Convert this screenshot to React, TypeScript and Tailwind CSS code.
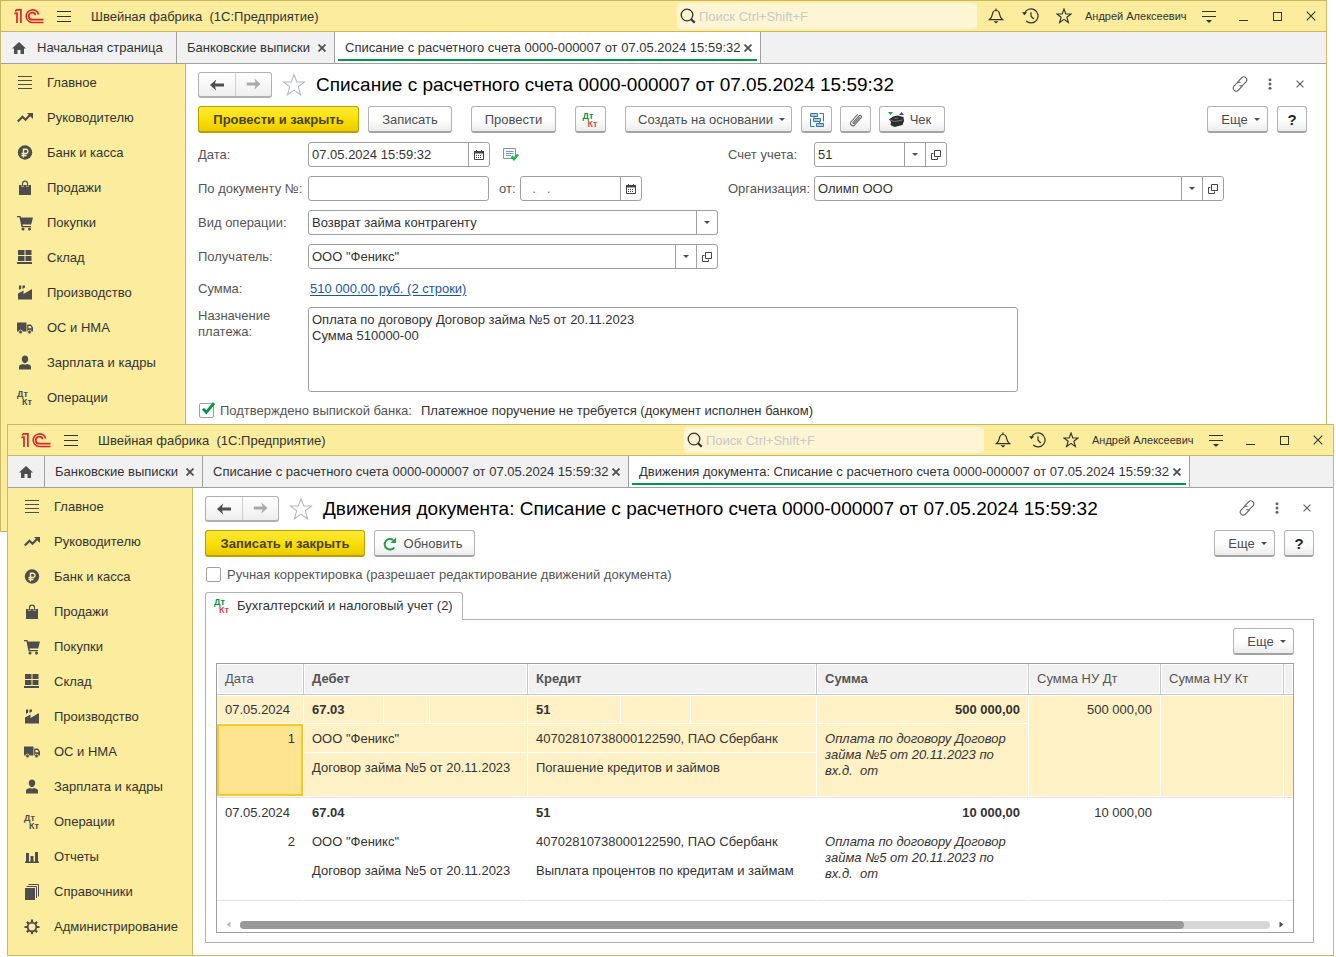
import type { ReactNode } from "react";
import { clsx } from "clsx";

const ICON = "#4d4d4d";

const Logo = () => (
  <svg width="30" height="15" viewBox="0 0 30 15" fill="none" stroke="#e0242b" strokeWidth="1.7" aria-label="1C">
    <path d="M.4 4.4 3 4.2V14M1.2 2.3 2.6 .9H6.9V14" />
    <path d="M24.6 5.4A6.3 6.3 0 1 0 18.3 13.5H29.5" />
    <path d="M21.6 6.2A3.5 3.5 0 1 0 18.3 10.7H29.5" />
  </svg>
);

const Burger = () => (
  <svg width="14" height="13" viewBox="0 0 14 13" stroke="#333" strokeWidth="1">
    <path d="M0 1.5H14M0 6.5H14M0 11.5H14" />
  </svg>
);

const SearchIcon = () => (
  <svg width="16" height="16" viewBox="0 0 16 16" fill="none" stroke="#333">
    <circle cx="7" cy="7" r="5.8" strokeWidth="1.3" />
    <path d="M11 11.2 14.8 14.6" strokeWidth="2.2" />
  </svg>
);

const Bell = () => (
  <svg width="16" height="16" viewBox="0 0 16 16" fill="none" stroke="#333" strokeWidth="1.2">
    <path d="M1.5 11.6C4.6 9.5 3.9 6.4 5 4.2 5.7 2.9 6.8 2.5 8 2.5S10.3 2.9 11 4.2C12.1 6.4 11.4 9.5 14.5 11.6Z" />
    <path d="M8 2.5V.5" />
    <path d="M5.5 13.2H10.5L8 15.4Z" fill="#333" stroke="none" />
  </svg>
);

const History = () => (
  <svg width="17" height="16" viewBox="0 0 17 16" fill="none" stroke="#333" strokeWidth="1.2">
    <path d="M2.6 5.2A7 7 0 1 1 4.2 13" />
    <path d="M9 4.2V8.2L11.8 11" />
    <path d="M0 4.2H5.2L2.4 7.2Z" fill="#333" stroke="none" />
  </svg>
);

const Star = ({ size = 16, color = "#333" }: { size?: number; color?: string }) => (
  <svg width={size} height={size} viewBox="0 0 24 24" fill="none" stroke={color} strokeWidth={size > 20 ? 1.1 : 1.7}>
    <path d="M12 1.5 14.7 9H22.6L16.3 13.8 18.6 21.8 12 17.1 5.4 21.8 7.7 13.8 1.4 9H9.3Z" />
  </svg>
);

const MenuDown = () => (
  <svg width="14" height="14" viewBox="0 0 14 14" stroke="#333">
    <path d="M0 2.5H14M0 7.5H14" />
    <path d="M4 11H10L7 14Z" fill="#333" stroke="none" />
  </svg>
);

const Cross = ({ size = 10, color = "#333", width = 1.1 }: { size?: number; color?: string; width?: number }) => (
  <svg width={size} height={size} viewBox="0 0 10 10" stroke={color} strokeWidth={width}>
    <path d="M.7 .7 9.3 9.3M9.3 .7 .7 9.3" />
  </svg>
);

const Home = () => (
  <svg width="14" height="12" viewBox="0 0 14 12" fill={ICON}>
    <path d="M7 0 14 6.5H12V12H8.5V8H5.5V12H2V6.5H0Z" />
  </svg>
);

const ArrowLeft = ({ color = ICON }: { color?: string }) => (
  <svg width="14" height="12" viewBox="0 0 14 12" fill={color}>
    <path d="M6.2 .6 5 4.6H14V7.4H5L6.2 11.4 0 6Z" />
  </svg>
);

const LinkIcon = () => (
  <svg width="16" height="16" viewBox="0 0 16 16" fill="none" stroke="#666" strokeWidth="1.1" strokeLinecap="round">
    <path d="M5.5 6.2 9.5 2C10.7.7 12.3.5 13.6 1.5 15.1 2.8 15.2 4.4 14 5.8L10.8 9.2C9.9 10 9 10.2 7.9 9.6" />
    <path d="M10.5 9.8 6.5 14C5.3 15.3 3.7 15.5 2.4 14.5.9 13.2.8 11.6 2 10.2L5.2 6.8C6.1 6 7 5.8 8.1 6.4" />
  </svg>
);

const Dots = () => (
  <svg width="4" height="12" viewBox="0 0 4 12" fill="#666">
    <circle cx="2" cy="1.7" r="1.5" />
    <circle cx="2" cy="6" r="1.5" />
    <circle cx="2" cy="10.3" r="1.5" />
  </svg>
);

const Caret = () => (
  <svg width="6" height="3" viewBox="0 0 6 3" fill={ICON}>
    <path d="M0 0H6L3 3Z" />
  </svg>
);

const OpenIcon = () => (
  <svg width="10" height="10" viewBox="0 0 10 10" fill="none" stroke="#444" strokeWidth="1">
    <path d="M3.5 .5H9.5V6.5H3.5ZM2.5 3.5H.5V9.5H6.5V7.5" />
  </svg>
);

const CalendarIcon = () => (
  <svg width="10" height="10" viewBox="0 0 10 10">
    <path d="M.5 2.5V9.5H9.5V2.5" fill="none" stroke="#444" />
    <path d="M0 1H2V0H3V1H7V0H8V1H10V3.5H0Z" fill="#444" />
    <path d="M2 5.5H8M2 7.5H8" stroke="#444" strokeDasharray="1 1" />
  </svg>
);

const PostedIcon = () => (
  <svg width="16" height="13" viewBox="0 0 16 13" fill="none">
    <path d="M.5 .5H12.5V10.5H.5Z" fill="#f4f8fc" stroke="#8296ad" />
    <path d="M3 3.5H10.5M3 5.5H10.5M3 7.5H8" stroke="#8296ad" />
    <path d="M8.5 8.5 11 11 15 6.5" stroke="#2bb24c" strokeWidth="2.6" />
  </svg>
);

const StructureIcon = () => (
  <svg width="16" height="16" viewBox="0 0 16 16" fill="#a9cbe6" stroke="#3a76a3">
    <path d="M1.5 1.5H8.5V4.5H1.5ZM4.5 6.5H11.5V9.5H4.5ZM7.5 11.5H14.5V14.5H7.5Z" />
    <path d="M10.5 1.5H14.5V9.5M1.5 6.5V14.5H5.5M5 4.5V6M10.5 10V11.5" fill="none" />
  </svg>
);

const Clip = () => (
  <svg width="14" height="14" viewBox="0 0 14 14" fill="none" stroke="#666" strokeWidth="1.1" strokeLinecap="round">
    <path d="M10.5 4.5 5.3 10.4C4.6 11.1 3.6 10.2 4.2 9.4L10 2.9C11.2 1.6 13.3 3.2 12 4.9L5.7 12C3.8 14 .2 11.7 2 9L8.5 1.5" />
  </svg>
);

const CashRegister = () => (
  <svg width="17" height="16" viewBox="0 0 17 16">
    <path d="M0 0H5L2.5 3Z" fill="#17a648" />
    <path d="M11 3H16L13.5 0Z" fill="#2b3fd0" />
    <path d="M1 7.5 5 4.5 10 3.5 15.5 5 16 9 14.5 13 6.5 15 2.5 13 3 10Z" fill="#2e2e2e" />
    <path d="M2 8 6.5 9.5 14.5 8M6.5 6.5 10 6" stroke="#8a8a8a" strokeWidth=".8" fill="none" />
  </svg>
);

const Refresh = () => (
  <svg width="14" height="14" viewBox="0 0 14 14" fill="none" stroke="#25a244" strokeWidth="2">
    <path d="M11.3 10.3A5.3 5.3 0 1 1 10.2 3" />
    <path d="M7.3 6H13V.4Z" fill="#25a244" stroke="none" />
  </svg>
);

const DtKt = ({ colored = false }: { colored?: boolean }) => (
  <span className="flex w-4 flex-col text-left text-[9px] leading-[8px] font-bold">
    <span className={colored ? "text-[#00964b]" : "text-[#4d4d4d]"}>Дт</span>
    <span className={clsx("pl-[5px]", colored ? "text-[#d94a4a]" : "text-[#4d4d4d]")}>Кт</span>
  </span>
);

const SideIcon = ({ children }: { children: ReactNode }) => (
  <svg width="16" height="16" viewBox="0 0 16 16" fill={ICON}>
    {children}
  </svg>
);

const sections: { title: string; icon: ReactNode }[] = [
  {
    title: "Главное",
    icon: (
      <SideIcon>
        <path d="M1 1.5H15M1 5.5H15M1 9.5H15M1 13.5H15" stroke={ICON} />
      </SideIcon>
    ),
  },
  {
    title: "Руководителю",
    icon: (
      <SideIcon>
        <path d="M.8 11.5 5.5 6.8 8.5 9.7 13 5" fill="none" stroke={ICON} strokeWidth="2.2" />
        <path d="M10 3H16V9Z" />
      </SideIcon>
    ),
  },
  {
    title: "Банк и касса",
    icon: (
      <SideIcon>
        <circle cx="8" cy="7.5" r="7.2" />
        <path d="M6.5 12.5V4.2H9.3A2.2 2.2 0 0 1 9.3 8.5H4.5M4.5 10.5H9.5" fill="none" stroke="#fbec9e" strokeWidth="1.4" />
      </SideIcon>
    ),
  },
  {
    title: "Продажи",
    icon: (
      <SideIcon>
        <path d="M2 5H4.5V7H6.5V5H9.5V7H11.5V5H14V15H2Z" />
        <path d="M5.5 6.5V3.5C5.5.3 10.5.3 10.5 3.5V6.5" fill="none" stroke={ICON} strokeWidth="1.2" />
      </SideIcon>
    ),
  },
  {
    title: "Покупки",
    icon: (
      <SideIcon>
        <path d="M0 1H3.5L4 2.5H16L14.2 9.5H5.5L5.8 11H14V12.3H4.5L2.5 2.3H0Z" />
        <circle cx="6" cy="14" r="1.5" />
        <circle cx="12.5" cy="14" r="1.5" />
      </SideIcon>
    ),
  },
  {
    title: "Склад",
    icon: (
      <SideIcon>
        <path d="M1 0H7.5V5H1ZM8.5 0H14.5V5H8.5ZM1 6H7.5V11H1ZM8.5 6H14.5V11H8.5ZM0 12H15V14H0Z" />
      </SideIcon>
    ),
  },
  {
    title: "Производство",
    icon: (
      <SideIcon>
        <path d="M1 14.5V8.5L6.5 5.5V9L15 4V14.5ZM2 .5H4.2V3.5L2 5ZM5.5 .5H8V2.5L5.5 4Z" />
      </SideIcon>
    ),
  },
  {
    title: "ОС и НМА",
    icon: (
      <SideIcon>
        <path d="M0 2.5H9.5V11.5H0ZM10.2 4.5H14L16 7.5V11.5H10.2ZM11.5 6V8.3H14.8L13.4 6Z" fillRule="evenodd" />
        <circle cx="3.5" cy="12" r="1.9" stroke="#fbec9e" strokeWidth=".8" />
        <circle cx="12.5" cy="12" r="1.9" stroke="#fbec9e" strokeWidth=".8" />
      </SideIcon>
    ),
  },
  {
    title: "Зарплата и кадры",
    icon: (
      <SideIcon>
        <path d="M8 .5C10 .5 11.2 2 11.2 4S9.8 8.2 8 8.2 4.8 6.2 4.8 4 6 .5 8 .5ZM2 14.5V11.5C2 10.3 3.5 9.6 6 9 7.2 9.8 8.8 9.8 10 9 12.5 9.6 14 10.3 14 11.5V14.5Z" />
      </SideIcon>
    ),
  },
  { title: "Операции", icon: <DtKt /> },
  {
    title: "Отчеты",
    icon: (
      <SideIcon>
        <path d="M2 4H5V12.5H2ZM6.5 7H9.5V12.5H6.5ZM11 3H14V12.5H11ZM1 12.5H15V14H1Z" />
      </SideIcon>
    ),
  },
  {
    title: "Справочники",
    icon: (
      <SideIcon>
        <path d="M1 4H11V16H1Z" />
        <path d="M2.5 2.5H12.5V14M4.5 .5H14.5V12.5" fill="none" stroke={ICON} />
      </SideIcon>
    ),
  },
  {
    title: "Администрирование",
    icon: (
      <SideIcon>
        <path
          d="M8 .5V4M8 12V15.2M.5 8H4M12 8H15.5M2.9 2.9 5 5M11 11 13.1 13.1M13.1 2.9 11 5M5 11 2.9 13.1"
          stroke={ICON}
          strokeWidth="2.2"
        />
        <circle cx="8" cy="8" r="4.3" fill="#fbec9e" stroke={ICON} strokeWidth="1.8" />
      </SideIcon>
    ),
  },
];

const TitleBar = () => (
  <header className="flex h-[31px] items-center border-b border-[#c9b965] bg-[#fbec9e] pl-[13px] pr-[10px]">
    <Logo />
    <button aria-label="Меню" className="ml-[13px]">
      <Burger />
    </button>
    <h2 className="ml-5 whitespace-pre pt-px">Швейная фабрика  (1С:Предприятие)</h2>
    <label className="ml-auto flex h-[26px] w-[300px] items-center gap-[3px] rounded-sm bg-[#fdf5d4] pl-[3px]">
      <SearchIcon />
      <input
        type="search"
        aria-label="Поиск"
        placeholder="Поиск Ctrl+Shift+F"
        className="min-w-0 flex-1 bg-transparent pt-px outline-none placeholder:text-[#c9c9c9]"
      />
    </label>
    <div className="ml-[11px] flex items-center">
      <button aria-label="Оповещения"><Bell /></button>
      <button aria-label="История" className="ml-[18px]"><History /></button>
      <button aria-label="Избранное" className="ml-[17px]"><Star /></button>
      <a href="#user" className="ml-[13px] w-[104px] whitespace-nowrap text-[11px]">Андрей Алексеевич</a>
      <button aria-label="Сервис" className="ml-[13px]"><MenuDown /></button>
      <button aria-label="Свернуть" className="ml-[23px] mt-2 h-px w-[9px] bg-[#333]" />
      <button aria-label="Развернуть" className="ml-[25px] size-[9px] border border-[#333]" />
      <button aria-label="Закрыть" className="ml-6"><Cross /></button>
    </div>
  </header>
);

type TabProps = { title: string; width: string; active?: boolean };

const WindowTab = ({ title, width, active }: TabProps) => (
  <div className={clsx("flex border-r border-[#a0a0a0] px-[3px] pb-[2px]", width, active && "bg-white")}>
    <div
      className={clsx(
        "flex flex-1 items-center justify-between border-b-2 pl-[7px] pr-[5px] pt-1",
        active ? "border-[#00964b]" : "border-transparent",
      )}
    >
      <a href="#tab" className="whitespace-nowrap">{title}</a>
      <button aria-label={`Закрыть: ${title}`}>
        <Cross size={8} color="#4d4d4d" width={2.2} />
      </button>
    </div>
  </div>
);

const AppWindow = ({
  className,
  homeTitle,
  tabs,
  items,
  children,
}: {
  className: string;
  homeTitle?: string;
  tabs: TabProps[];
  items: typeof sections;
  children: ReactNode;
}) => (
  <section className={clsx("absolute flex min-h-[532px] flex-col border border-[#c9b965] bg-white", className)}>
    <TitleBar />
    <div className="flex h-8 border-b border-[#a0a0a0] bg-[#f1f1f1]">
      <a
        href="#home"
        aria-label="Начальная страница"
        className={clsx("flex shrink-0 items-center gap-[11px] border-r border-[#a0a0a0] pl-[11px]", homeTitle ? "w-[176px]" : "w-[37px]")}
      >
        <Home />
        {homeTitle && <span>{homeTitle}</span>}
      </a>
      {tabs.map((tab) => (
        <WindowTab key={tab.title} {...tab} />
      ))}
    </div>
    <div className="flex flex-1">
      <nav className="w-[185px] shrink-0 border-r border-[#c9b965] bg-[#fbec9e] pt-px">
        {items.map(({ title, icon }) => (
          <a key={title} href="#section" className="flex h-[35px] items-center gap-[14px] pl-4">
            <span className="flex w-4 justify-center">{icon}</span>
            {title}
          </a>
        ))}
      </nav>
      <main className="min-w-0 flex-1 pb-3 pl-3 pr-[19px] pt-2">{children}</main>
    </div>
  </section>
);

const PageTitle = ({ children }: { children: ReactNode }) => (
  <div className="mb-2 flex h-[26px] items-center">
    <div className="flex h-[26px] w-[74px] rounded-[3px] border border-b-2 border-[#b0b0b0] bg-linear-to-b from-white to-[#efefef]">
      <button aria-label="Назад" className="flex flex-1 items-center justify-center border-r border-[#cfcfcf]"><ArrowLeft /></button>
      <button aria-label="Вперед" className="flex flex-1 rotate-180 items-center justify-center"><ArrowLeft color="#a9a9a9" /></button>
    </div>
    <button aria-label="В избранное" className="ml-[10px]"><Star size={24} color="#b4b9bf" /></button>
    <h1 className="ml-[10px] whitespace-nowrap text-[19px] leading-6 text-black">{children}</h1>
    <div className="ml-auto mr-[3px] flex items-center pb-[2px]">
      <button aria-label="Ссылка"><LinkIcon /></button>
      <button aria-label="Еще действия" className="ml-5"><Dots /></button>
      <button aria-label="Закрыть форму" className="ml-6"><Cross size={8} color="#555" width={1.3} /></button>
    </div>
  </div>
);

const Button = ({
  children,
  className,
  primary,
  label,
}: {
  children: ReactNode;
  className?: string;
  primary?: boolean;
  label?: string;
}) => (
  <button
    aria-label={label}
    className={clsx(
      "flex h-[27px] shrink-0 items-center justify-center whitespace-nowrap rounded-[3px] border border-b-2 bg-linear-to-b pt-px",
      primary
        ? "border-[#b89f00] from-[#ffe833] via-[#fbe000] to-[#eccb00] font-bold text-[#4a4222]"
        : "border-[#b3b3b3] border-b-[#a3a3a3] from-white via-white to-[#ececec] text-[#4d4d4d]",
      className,
    )}
  >
    {children}
  </button>
);

const MoreButton = () => (
  <Button className="w-[61px] gap-[6px] pl-[6px]">
    Еще <Caret />
  </Button>
);

const HelpButton = () => (
  <Button label="Справка" className="w-[30px] text-[15px] font-bold">
    <span className="text-[#222]">?</span>
  </Button>
);

const Field = ({
  id,
  value = "",
  className,
  buttons = [],
}: {
  id: string;
  value?: string;
  className: string;
  buttons?: ("calendar" | "list" | "open")[];
}) => (
  <div className={clsx("flex h-[25px] rounded-[3px] border border-[#a0a0a0] bg-white", className)}>
    <input id={id} defaultValue={value} className="w-0 min-w-0 flex-1 bg-transparent px-[3px] outline-none" />
    {buttons.map((kind) => (
      <button
        key={kind}
        aria-label={kind === "calendar" ? "Календарь" : kind === "list" ? "Выбрать" : "Открыть"}
        className="flex w-[21px] items-center justify-center border-l border-[#a0a0a0]"
      >
        {kind === "calendar" && <CalendarIcon />}
        {kind === "list" && <Caret />}
        {kind === "open" && <OpenIcon />}
      </button>
    ))}
  </div>
);

const Label = ({ htmlFor, children, className = "w-[110px]" }: { htmlFor: string; children: ReactNode; className?: string }) => (
  <label htmlFor={htmlFor} className={clsx("shrink-0 whitespace-nowrap text-[#555]", className)}>
    {children}
  </label>
);

const PaymentForm = () => (
  <>
    <PageTitle>Списание с расчетного счета 0000-000007 от 07.05.2024 15:59:32</PageTitle>
    <div className="mb-[9px] flex">
      <Button primary className="w-[161px]">Провести и закрыть</Button>
      <Button className="ml-[9px] w-[84px]">Записать</Button>
      <Button className="ml-[19px] w-[85px]">Провести</Button>
      <Button label="Проводки" className="ml-[19px] w-[31px]"><DtKt colored /></Button>
      <Button className="ml-[19px] w-[167px] gap-[6px] pl-[6px]">Создать на основании <Caret /></Button>
      <Button label="Структура подчиненности" className="ml-[9px] w-[31px]"><StructureIcon /></Button>
      <Button label="Файлы" className="ml-2 w-[31px]"><Clip /></Button>
      <Button className="ml-2 w-[66px] gap-[5px] pr-[5px]"><CashRegister /> Чек</Button>
      <div className="ml-auto flex gap-[9px]">
        <MoreButton />
        <HelpButton />
      </div>
    </div>
    <div className="flex flex-col gap-[9px]">
      <div className="flex h-[25px] items-center">
        <Label htmlFor="date">Дата:</Label>
        <Field id="date" value="07.05.2024 15:59:32" className="w-[182px]" buttons={["calendar"]} />
        <button aria-label="Проведен" className="ml-[13px]"><PostedIcon /></button>
        <Label htmlFor="account" className="ml-[209px] w-[86px]">Счет учета:</Label>
        <Field id="account" value="51" className="w-[133px]" buttons={["list", "open"]} />
      </div>
      <div className="flex h-[25px] items-center">
        <Label htmlFor="number">По документу №:</Label>
        <Field id="number" className="w-[181px]" />
        <Label htmlFor="from" className="ml-[10px] w-[21px]">от:</Label>
        <div className="flex h-[25px] w-[122px] rounded-[3px] border border-[#a0a0a0]">
          <input id="from" defaultValue="  .   ." className="w-0 min-w-0 flex-1 px-1 text-[#3a7fc4] outline-none" />
          <button aria-label="Календарь" className="flex w-[21px] items-center justify-center border-l border-[#a0a0a0]"><CalendarIcon /></button>
        </div>
        <Label htmlFor="org" className="ml-[86px] w-[86px]">Организация:</Label>
        <Field id="org" value="Олимп ООО" className="w-[410px]" buttons={["list", "open"]} />
      </div>
      <div className="flex h-[25px] items-center">
        <Label htmlFor="kind">Вид операции:</Label>
        <div className="grid h-[25px] w-[410px] grid-cols-[1fr_21px] rounded-[3px] border border-[#a0a0a0]">
          <select id="kind" className="appearance-none bg-transparent px-[3px] outline-none">
            <option>Возврат займа контрагенту</option>
          </select>
          <span className="flex items-center justify-center border-l border-[#a0a0a0]"><Caret /></span>
        </div>
      </div>
      <div className="flex h-[25px] items-center">
        <Label htmlFor="payee">Получатель:</Label>
        <Field id="payee" value={'ООО "Феникс"'} className="w-[410px]" buttons={["list", "open"]} />
      </div>
      <div className="flex h-5 items-end pb-px">
        <span className="w-28 text-[#555]">Сумма:</span>
        <a href="#sum" className="text-[#1a55ad] underline underline-offset-2">510 000,00 руб. (2 строки)</a>
      </div>
      <div className="flex">
        <label htmlFor="purpose" className="w-[110px] shrink-0 pt-px text-[#555]">
          Назначение<br />платежа:
        </label>
        <textarea
          id="purpose"
          defaultValue={"Оплата по договору Договор займа №5 от 20.11.2023\nСумма 510000-00"}
          className="h-[85px] w-[710px] resize-none rounded-[3px] border border-[#a0a0a0] px-[3px] py-1 outline-none"
        />
      </div>
      <div className="flex h-[18px] items-center">
        <span className="relative flex">
          <input id="confirmed" type="checkbox" defaultChecked className="ml-px size-[15px] appearance-none rounded-xs border border-[#a0a0a0]" />
          <svg className="pointer-events-none absolute bottom-[3px] left-1" width="13" height="13" viewBox="0 0 13 13" fill="none" stroke="#00964b" strokeWidth="2.8">
            <path d="M1 6.8 4.3 10.3 12 1.2" />
          </svg>
        </span>
        <label htmlFor="confirmed" className="ml-[6px] pt-px text-[#555]">Подтверждено выпиской банка:</label>
        <span className="ml-[9px] pt-px">Платежное поручение не требуется (документ исполнен банком)</span>
      </div>
    </div>
  </>
);

type Entry = {
  n: number;
  debit: string;
  credit: string;
  sum: string;
  creditNote: string;
  selected?: boolean;
};

const entries: Entry[] = [
  { n: 1, debit: "67.03", credit: "51", sum: "500 000,00", creditNote: "Погашение кредитов и займов", selected: true },
  { n: 2, debit: "67.04", credit: "51", sum: "10 000,00", creditNote: "Выплата процентов по кредитам и займам" },
];

const headers = [
  { title: "Дата", span: 1, bold: false },
  { title: "Дебет", span: 3, bold: true },
  { title: "Кредит", span: 3, bold: true },
  { title: "Сумма", span: 1, bold: true },
  { title: "Сумма НУ Дт", span: 1, bold: false },
  { title: "Сумма НУ Кт", span: 1, bold: false },
];

const line = "border-r border-b border-white px-2 whitespace-nowrap";
const rowEnd = "border-b-[#e2e2e2] shadow-[inset_0_-1px_0_#fff]";

const EntryRows = ({ entry }: { entry: Entry }) => (
  <tbody className={clsx("align-top", entry.selected && "bg-[#fef1c6]")}>
    <tr className="h-[29px]">
      <td className={clsx(line, "border-t pt-[6px]")}>07.05.2024</td>
      <td className={clsx(line, "border-t pt-[6px] font-bold")}>{entry.debit}</td>
      <td className={clsx(line, "border-t")} />
      <td className={clsx(line, "border-t")} />
      <td className={clsx(line, "border-t pt-[6px] font-bold")}>{entry.credit}</td>
      <td className={clsx(line, "border-t")} />
      <td className={clsx(line, "border-t")} />
      <td className={clsx(line, "border-t pt-[6px] text-right font-bold")}>{entry.sum}</td>
      <td rowSpan={3} className={clsx(line, rowEnd, "border-t pt-[6px] text-right")}>{entry.sum}</td>
      <td rowSpan={3} className={clsx(line, rowEnd, "border-t")} />
      <td rowSpan={3} className={clsx(rowEnd, "border-b border-t border-t-white")} />
    </tr>
    <tr className="h-[29px]">
      <td rowSpan={2} className={clsx("border-b border-r border-r-white text-right", rowEnd)}>
        <div className={clsx("mb-px h-[72px] border-2 pr-[6px] pt-[5px]", entry.selected ? "border-[#fcc81f] bg-[#fee391]" : "border-transparent")}>
          {entry.n}
        </div>
      </td>
      <td colSpan={3} className={clsx(line, "pt-[7px]")}>ООО "Феникс"</td>
      <td colSpan={3} className={clsx(line, "pt-[7px]")}>40702810738000122590, ПАО Сбербанк</td>
      <td rowSpan={2} className={clsx(line, rowEnd, "pt-[7px] italic")}>
        Оплата по договору Договор<br />займа №5 от 20.11.2023 по<br />вх.д.&nbsp; от
      </td>
    </tr>
    <tr className="h-[45px]">
      <td colSpan={3} className={clsx(line, rowEnd, "pt-[7px]")}>Договор займа №5 от 20.11.2023</td>
      <td colSpan={3} className={clsx(line, rowEnd, "pt-[7px]")}>{entry.creditNote}</td>
    </tr>
  </tbody>
);

const Movements = () => (
  <>
    <PageTitle>Движения документа: Списание с расчетного счета 0000-000007 от 07.05.2024 15:59:32</PageTitle>
    <div className="mb-[9px] flex">
      <Button primary className="w-[160px]">Записать и закрыть</Button>
      <Button className="ml-[9px] w-[101px] gap-[7px] pr-1"><Refresh /> Обновить</Button>
      <div className="ml-auto flex gap-[9px]">
        <MoreButton />
        <HelpButton />
      </div>
    </div>
    <div className="mb-[9px] flex h-[17px] items-center text-[#555]">
      <input id="manual" type="checkbox" className="ml-px size-[15px] appearance-none rounded-xs border border-[#a0a0a0] bg-white" />
      <label htmlFor="manual" className="ml-[6px]">Ручная корректировка (разрешает редактирование движений документа)</label>
    </div>
    <div className="relative -mb-px flex">
      <button className="flex h-7 w-[258px] items-center gap-[7px] whitespace-nowrap rounded-t-[3px] border border-b-0 border-[#b0b0b0] bg-white pb-[2px] pl-2">
        <DtKt colored /> Бухгалтерский и налоговый учет (2)
      </button>
    </div>
    <div className="border border-[#b0b0b0] pb-[9px] pl-[10px] pr-[19px] pt-2">
      <div className="mb-2 flex justify-end">
        <MoreButton />
      </div>
      <div className="border border-[#a0a0a0]">
        <table className="w-full table-fixed border-separate border-spacing-0">
          <colgroup>
            <col className="w-[87px]" />
            <col className="w-[80px]" />
            <col className="w-[46px]" />
            <col className="w-[98px]" />
            <col className="w-[93px]" />
            <col className="w-[70px]" />
            <col className="w-[126px]" />
            <col className="w-[212px]" />
            <col className="w-[132px]" />
            <col className="w-[123px]" />
            <col />
          </colgroup>
          <thead>
            <tr className="h-[31px] bg-[#f1f1f1] text-left text-[#555]">
              {headers.map(({ title, span, bold }) => (
                <th
                  key={title}
                  colSpan={span}
                  className={clsx("border-b border-r border-[#c8c8c8] pl-2 shadow-[inset_0_0_0_1px_#fff]", bold ? "font-bold" : "font-normal")}
                >
                  {title}
                </th>
              ))}
              <th className="border-b border-[#c8c8c8] shadow-[inset_0_0_0_1px_#fff]" />
            </tr>
          </thead>
          {entries.map((entry) => (
            <EntryRows key={entry.n} entry={entry} />
          ))}
        </table>
        <div className="flex h-[31px] items-end gap-[9px] px-[9px] pb-[3px]">
          <svg className="mb-px shrink-0" width="5" height="7" viewBox="0 0 5 7" fill="#bdbdbd"><path d="M4.5 .5V6.5L.5 3.5Z" /></svg>
          <div className="h-2 flex-1 rounded-full bg-[#d6d6d6]">
            <div className="h-2 w-11/12 rounded-full bg-[#999]" />
          </div>
          <svg className="mb-px shrink-0" width="5" height="7" viewBox="0 0 5 7" fill="#4d4d4d"><path d="M.5 .5V6.5L4.5 3.5Z" /></svg>
        </div>
      </div>
    </div>
  </>
);

export default function App() {
  return (
    <div className="relative min-h-screen overflow-hidden bg-white font-['Liberation_Sans',Arial,sans-serif] text-[13px] leading-4 text-[#333]">
      <AppWindow
        className="left-0 right-[9px] top-0"
        homeTitle="Начальная страница"
        items={sections.slice(0, 10)}
        tabs={[
          { title: "Банковские выписки", width: "w-[158px]" },
          { title: "Списание с расчетного счета 0000-000007 от 07.05.2024 15:59:32", width: "w-[426px]", active: true },
        ]}
      >
        <PaymentForm />
      </AppWindow>
      <AppWindow
        className="left-[7px] right-[2px] top-[424px]"
        items={sections}
        tabs={[
          { title: "Банковские выписки", width: "w-[158px]" },
          { title: "Списание с расчетного счета 0000-000007 от 07.05.2024 15:59:32", width: "w-[426px]" },
          {
            title: "Движения документа: Списание с расчетного счета 0000-000007 от 07.05.2024 15:59:32",
            width: "w-[561px]",
            active: true,
          },
        ]}
      >
        <Movements />
      </AppWindow>
    </div>
  );
}
